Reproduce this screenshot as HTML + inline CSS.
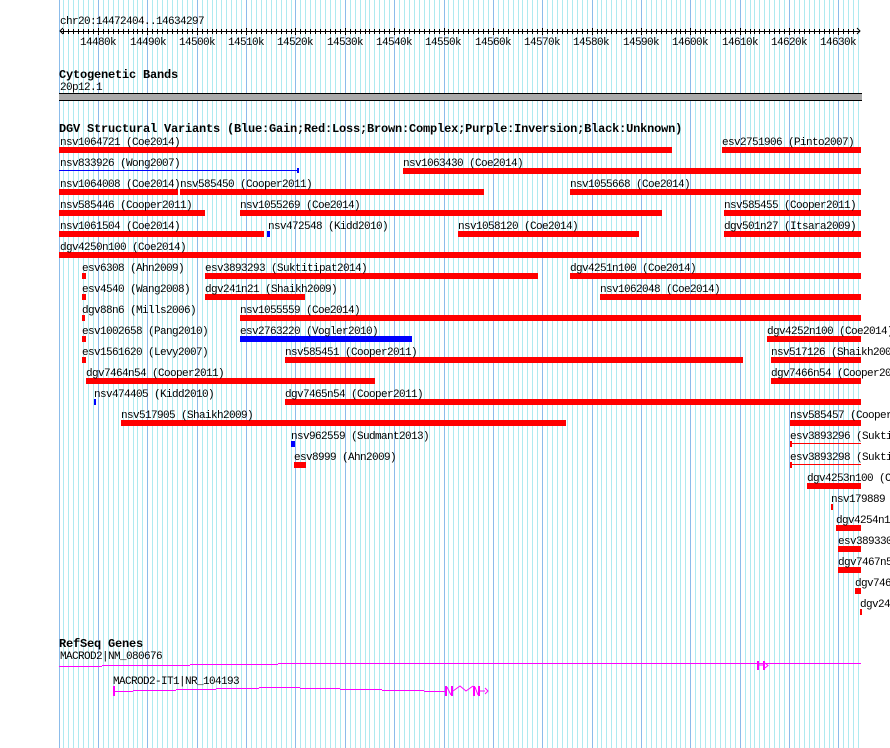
<!DOCTYPE html>
<html><head><meta charset="utf-8"><style>
html,body{margin:0;padding:0;background:#fff;width:890px;height:748px;overflow:hidden}
svg{display:block}
text{font-family:"Liberation Mono",monospace;font-size:11px;letter-spacing:-0.6px;fill:#000}
.b{font-weight:bold;font-size:12px;letter-spacing:-0.2px}
</style></head><body>
<svg id="s" width="890" height="748" viewBox="0 0 890 748" xmlns="http://www.w3.org/2000/svg" shape-rendering="crispEdges">
<g id="grid"></g>
<g id="ticks"></g>
<!-- ruler -->
<text x="60" y="24">chr20:14472404..14634297</text>
<rect x="60" y="31" width="800" height="1" fill="#000"/>
<path d="M63 28 L60 31 L63 34 M857 28 L860 31 L857 34" stroke="#000" fill="none" shape-rendering="auto"/>
<g text-anchor="middle">
<text x="98" y="45">14480k</text><text x="148" y="45">14490k</text><text x="197" y="45">14500k</text>
<text x="246" y="45">14510k</text><text x="295" y="45">14520k</text><text x="345" y="45">14530k</text>
<text x="394" y="45">14540k</text><text x="443" y="45">14550k</text><text x="493" y="45">14560k</text>
<text x="542" y="45">14570k</text><text x="591" y="45">14580k</text><text x="641" y="45">14590k</text>
<text x="690" y="45">14600k</text><text x="740" y="45">14610k</text><text x="789" y="45">14620k</text>
<text x="838" y="45">14630k</text>
</g>
<!-- cyto -->
<text class="b" x="59" y="78">Cytogenetic Bands</text>
<text x="60" y="90">20p12.1</text>
<rect x="59" y="93" width="803" height="8" fill="#000"/>
<rect x="59" y="94" width="803" height="6" fill="#aaa"/>
<!-- DGV -->
<text class="b" x="59" y="132">DGV Structural Variants (Blue:Gain;Red:Loss;Brown:Complex;Purple:Inversion;Black:Unknown)</text>
<g fill="#f00">
<rect x="59" y="147" width="613" height="6"/><rect x="722" y="147" width="139" height="6"/>
<rect x="403" y="168" width="458" height="6"/>
<rect x="59" y="189" width="119" height="6"/><rect x="180" y="189" width="304" height="6"/><rect x="570" y="189" width="291" height="6"/>
<rect x="59" y="210" width="146" height="6"/><rect x="240" y="210" width="422" height="6"/><rect x="724" y="210" width="137" height="6"/>
<rect x="59" y="231" width="205" height="6"/><rect x="458" y="231" width="181" height="6"/><rect x="724" y="231" width="137" height="6"/>
<rect x="59" y="252" width="802" height="6"/>
<rect x="82" y="273" width="4" height="6"/><rect x="205" y="273" width="333" height="6"/><rect x="570" y="273" width="291" height="6"/>
<rect x="82" y="294" width="4" height="6"/><rect x="205" y="294" width="100" height="6"/><rect x="600" y="294" width="261" height="6"/>
<rect x="82" y="315" width="3" height="6"/><rect x="240" y="315" width="621" height="6"/>
<rect x="82" y="336" width="4" height="6"/><rect x="767" y="336" width="94" height="6"/>
<rect x="82" y="357" width="4" height="6"/><rect x="285" y="357" width="458" height="6"/><rect x="771" y="357" width="90" height="6"/>
<rect x="86" y="378" width="289" height="6"/><rect x="771" y="378" width="90" height="6"/>
<rect x="285" y="399" width="576" height="6"/>
<rect x="121" y="420" width="445" height="6"/><rect x="790" y="420" width="71" height="6"/>
<rect x="790" y="441" width="2" height="6"/><rect x="790" y="443" width="71" height="1"/>
<rect x="294" y="462" width="12" height="6"/><rect x="790" y="462" width="2" height="6"/><rect x="790" y="464" width="71" height="1"/>
<rect x="807" y="483" width="54" height="6"/>
<rect x="831" y="504" width="2" height="6"/>
<rect x="836" y="525" width="25" height="6"/>
<rect x="838" y="546" width="23" height="6"/>
<rect x="838" y="567" width="23" height="6"/>
<rect x="855" y="588" width="6" height="6"/>
<rect x="860" y="609" width="2" height="6"/>
</g>
<g fill="#00f">
<rect x="59" y="170" width="239" height="1"/><rect x="297" y="168" width="2" height="5"/>
<rect x="267" y="231" width="3" height="6"/>
<rect x="240" y="336" width="172" height="6"/>
<rect x="94" y="399" width="2" height="6"/>
<rect x="291" y="441" width="4" height="6"/>
</g>
<text x="60" y="145">nsv1064721 (Coe2014)</text><text x="722" y="145">esv2751906 (Pinto2007)</text>
<text x="60" y="166">nsv833926 (Wong2007)</text><text x="403" y="166">nsv1063430 (Coe2014)</text>
<text x="60" y="187">nsv1064008 (Coe2014)</text><text x="180" y="187">nsv585450 (Cooper2011)</text><text x="570" y="187">nsv1055668 (Coe2014)</text>
<text x="60" y="208">nsv585446 (Cooper2011)</text><text x="240" y="208">nsv1055269 (Coe2014)</text><text x="724" y="208">nsv585455 (Cooper2011)</text>
<text x="60" y="229">nsv1061504 (Coe2014)</text><text x="268" y="229">nsv472548 (Kidd2010)</text><text x="458" y="229">nsv1058120 (Coe2014)</text><text x="724" y="229">dgv501n27 (Itsara2009)</text>
<text x="60" y="250">dgv4250n100 (Coe2014)</text>
<text x="82" y="271">esv6308 (Ahn2009)</text><text x="205" y="271">esv3893293 (Suktitipat2014)</text><text x="570" y="271">dgv4251n100 (Coe2014)</text>
<text x="82" y="292">esv4540 (Wang2008)</text><text x="205" y="292">dgv241n21 (Shaikh2009)</text><text x="600" y="292">nsv1062048 (Coe2014)</text>
<text x="82" y="313">dgv88n6 (Mills2006)</text><text x="240" y="313">nsv1055559 (Coe2014)</text>
<text x="82" y="334">esv1002658 (Pang2010)</text><text x="240" y="334">esv2763220 (Vogler2010)</text><text x="767" y="334">dgv4252n100 (Coe2014)</text>
<text x="82" y="355">esv1561620 (Levy2007)</text><text x="285" y="355">nsv585451 (Cooper2011)</text><text x="771" y="355">nsv517126 (Shaikh2009)</text>
<text x="86" y="376">dgv7464n54 (Cooper2011)</text><text x="771" y="376">dgv7466n54 (Cooper2011)</text>
<text x="94" y="397">nsv474405 (Kidd2010)</text><text x="285" y="397">dgv7465n54 (Cooper2011)</text>
<text x="121" y="418">nsv517905 (Shaikh2009)</text><text x="790" y="418">nsv585457 (Cooper2011)</text>
<text x="291" y="439">nsv962559 (Sudmant2013)</text><text x="790" y="439">esv3893296 (Suktitipat2014)</text>
<text x="294" y="460">esv8999 (Ahn2009)</text><text x="790" y="460">esv3893298 (Suktitipat2014)</text>
<text x="807" y="481">dgv4253n100 (Coe2014)</text>
<text x="831" y="502">nsv179889</text>
<text x="836" y="523">dgv4254n100</text>
<text x="838" y="544">esv3893300</text>
<text x="838" y="565">dgv7467n54</text>
<text x="855" y="586">dgv7468n54</text>
<text x="860" y="607">dgv24</text>
<!-- RefSeq -->
<text class="b" x="59" y="647">RefSeq Genes</text>
<text x="60" y="659">MACROD2|NM_080676</text>
<g fill="#f0f">
<rect x="59" y="666" width="43" height="1"/><rect x="102" y="665" width="88" height="1"/><rect x="190" y="664" width="88" height="1"/>
<rect x="278" y="663" width="87" height="1"/><rect x="365" y="663" width="87" height="1"/><rect x="452" y="663" width="409" height="1"/>
<rect x="757" y="661" width="2" height="9"/><rect x="763" y="661" width="2" height="9"/>
<rect x="113" y="686" width="2" height="10"/>
<rect x="113" y="691" width="20" height="1"/><rect x="133" y="690" width="43" height="1"/><rect x="176" y="689" width="40" height="1"/>
<rect x="216" y="688" width="43" height="1"/><rect x="259" y="687" width="41" height="1"/><rect x="300" y="688" width="40" height="1"/>
<rect x="340" y="689" width="42" height="1"/><rect x="382" y="690" width="42" height="1"/><rect x="424" y="691" width="21" height="1"/>
<rect x="445" y="686" width="2" height="10"/><rect x="451" y="686" width="2" height="10"/>
<rect x="473" y="686" width="2" height="10"/><rect x="478" y="686" width="2" height="10"/>
</g>
<path d="M759 665 L763 665 M765 663 L768 665.5 L765 668 M447 687 L451 695 M453 691 L460 686 L466 691 L473 686 M475 687 L478 695 M480 691 L485 691 M485 688 L488 691 L485 694" stroke="#f0f" stroke-width="1" fill="none" shape-rendering="auto"/>
<text x="113" y="684">MACROD2-IT1|NR_104193</text>
</svg>
<script>
(function(){
var ns="http://www.w3.org/2000/svg",g=document.getElementById("grid"),t=document.getElementById("ticks");
for(var k=-8;k<160;k++){
 var x=Math.round(98+k*4.936);
 if(x<59||x>861)continue;
 var major=(k%10===0);
 var r=document.createElementNS(ns,"rect");
 r.setAttribute("x",x);r.setAttribute("y",0);r.setAttribute("width",1);r.setAttribute("height",748);
 r.setAttribute("fill",major?"#8cbcea":"#aeeaf0");g.appendChild(r);
 if(x>60&&x<858){
 var q=document.createElementNS(ns,"rect");
 q.setAttribute("x",x);q.setAttribute("y",major?28:29);q.setAttribute("width",1);q.setAttribute("height",major?7:5);
 q.setAttribute("fill","#000");t.appendChild(q);}
}
var r0=document.createElementNS(ns,"rect");r0.setAttribute("x",59);r0.setAttribute("y",0);r0.setAttribute("width",1);r0.setAttribute("height",748);r0.setAttribute("fill","#8cbcea");g.appendChild(r0);
})();
</script>
</body></html>
